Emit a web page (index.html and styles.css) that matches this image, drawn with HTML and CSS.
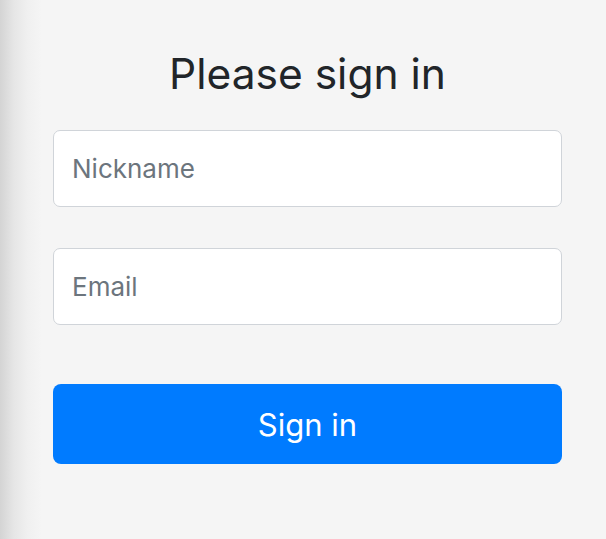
FILE: index.html
```html
<!DOCTYPE html>
<html lang="en">
<head>
<meta charset="utf-8">
<title>Please sign in</title>
<link rel="stylesheet" href="styles.css">
</head>
<body>
  <main class="page">
    <form class="signin">
      <h1 class="title">Please sign in</h1>
      <input class="field" type="text" placeholder="Nickname">
      <input class="field field-email" type="email" placeholder="Email">
      <button class="btn" type="button">Sign in</button>
    </form>
  </main>
</body>
</html>
```

FILE: styles.css
```css
html, body {
  margin: 0;
  padding: 0;
  height: 100%;
}
body {
  background: linear-gradient(to right, #d4d4d4 0px, #e6e6e6 14px, #f0f0f0 28px, #f5f5f5 42px, #f5f5f5 100%);
  font-family: Inter, "Liberation Sans", sans-serif;
}
.page {
  padding-left: 53px;
  padding-top: 45px;
}
.signin {
  width: 509px;
  display: flex;
  flex-direction: column;
}
.title {
  margin: 0 0 27px;
  font-size: 42.5px;
  font-weight: 400;
  line-height: 58px;
  text-align: center;
  color: #212529;
}
.field {
  box-sizing: border-box;
  height: 77px;
  padding: 0 18px;
  border: 1px solid #d0d4d9;
  border-radius: 7px;
  background: #fff;
  font-family: inherit;
  font-size: 26px;
  color: #495057;
  outline: none;
}
.field::placeholder {
  color: #6c757d;
}
.field-email {
  margin-top: 41px;
}
.btn {
  margin-top: 59px;
  height: 80px;
  border: none;
  border-radius: 8px;
  background: #007bff;
  color: #fff;
  font-family: inherit;
  font-size: 31px;
  cursor: pointer;
}
```
